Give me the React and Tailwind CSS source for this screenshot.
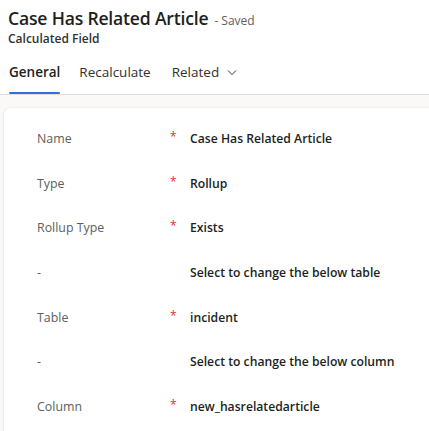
import React from "react";

const rows = [
  { label: "Name", required: true, value: "Case Has Related Article" },
  { label: "Type", required: true, value: "Rollup" },
  { label: "Rollup Type", required: true, value: "Exists" },
  { label: "-", required: false, value: "Select to change the below table" },
  { label: "Table", required: true, value: "incident" },
  { label: "-", required: false, value: "Select to change the below column" },
  { label: "Column", required: true, value: "new_hasrelatedarticle" },
];

const App = () => {
  return (
    <div
      className="w-[429px] h-[431px] overflow-hidden bg-white flex flex-col"
      style={{ fontFamily: '"Open Sans", "Noto Sans", sans-serif' }}
    >
      {/* Header */}
      <div className="px-2 pt-[5px]">
        <div className="flex items-baseline">
          <h1 className="text-[17.6px] font-semibold text-[#201f1e] leading-[26px] tracking-[-0.2px]">
            Case Has Related Article
          </h1>
          <span className="ml-[6px] text-[12px] text-[#605e5c]">- Saved</span>
        </div>
        <div className="text-[12px] font-semibold text-[#323130] leading-[16px]">
          Calculated Field
        </div>
      </div>

      {/* Tabs */}
      <div className="mt-[15px] flex items-end pl-[9px] border-b border-[#e1dfdd] h-[40px]">
        <div className="flex flex-col mr-[19px]">
          <span className="text-[13.5px] font-semibold text-[#201f1e] leading-[20px] pb-[10px]">
            General
          </span>
          <div className="h-[2px] bg-[#2f6fde] rounded-sm" />
        </div>
        <span className="text-[13.5px] text-[#323130] leading-[20px] pb-[12px] mr-[21px]">
          Recalculate
        </span>
        <span className="flex items-center text-[13.5px] text-[#323130] leading-[20px] pb-[12px]">
          Related
          <svg
            width="12"
            height="12"
            viewBox="0 0 12 12"
            className="ml-[7px]"
            fill="none"
            stroke="#323130"
            strokeWidth="1"
          >
            <path d="M2 4.5l4 4 4-4" />
          </svg>
        </span>
      </div>

      {/* Body */}
      <div className="flex-1 bg-[#faf9f8] pl-1 pt-[13px]">
        <div className="bg-white rounded-tl-md shadow-[0_0_2px_rgba(0,0,0,0.12),0_1px_2px_rgba(0,0,0,0.1)] h-full pt-[21px] pl-[33px]">
          {rows.map((r, i) => (
            <div key={i} className="flex items-start h-[44.7px]">
              <div className="w-[133px] text-[12.4px] text-[#605e5c] leading-[20px]">
                {r.label}
              </div>
              <div className="w-[20px] text-[#e02f2f] text-[12px] leading-[16px]">
                {r.required ? "*" : ""}
              </div>
              <div className="text-[12.2px] font-semibold text-[#201f1e] leading-[20px]">
                {r.value}
              </div>
            </div>
          ))}
        </div>
      </div>
    </div>
  );
};

export default App;
